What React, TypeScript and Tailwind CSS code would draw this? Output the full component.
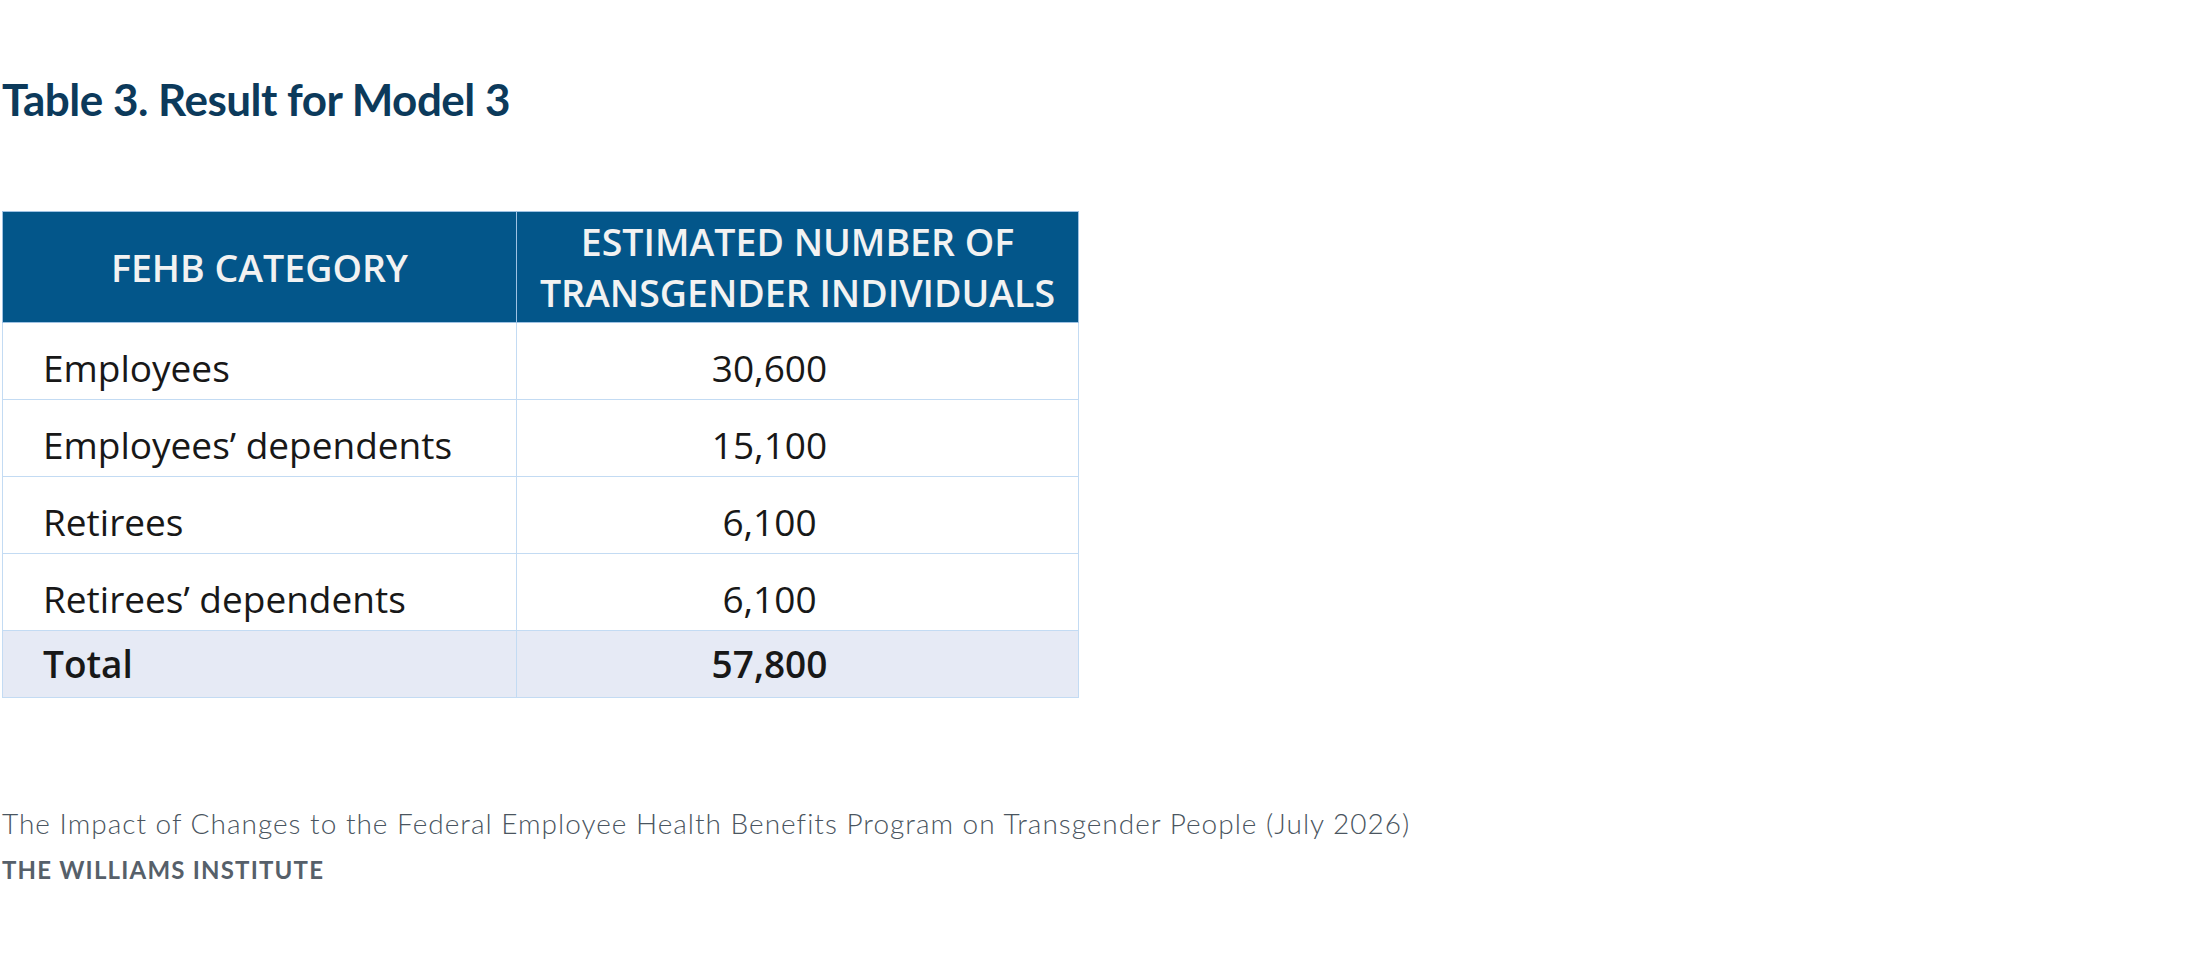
const rows = [
  { label: "Employees", value: "30,600" },
  { label: "Employees’ dependents", value: "15,100" },
  { label: "Retirees", value: "6,100" },
  { label: "Retirees’ dependents", value: "6,100" },
];

export default function App() {
  return (
    <div className="min-h-screen w-full bg-white pl-[2px]">
      <h1 className="pt-[77px] font-['Lato',sans-serif] text-[44px] font-bold leading-[44px] tracking-[-0.5px] text-[#0c3a5b]">
        Table 3. Result for Model 3
      </h1>

      <table className="mt-[90px] w-[1077px] border-collapse font-['Open_Sans',sans-serif]">
        <thead>
          <tr className="h-[111px] bg-[#03568a] text-[#f2f2f2]">
            <th className="w-[514px] border border-[#9fc2e3] px-1 text-[37.5px] font-semibold leading-[51px]">
              FEHB CATEGORY
            </th>
            <th className="border border-[#9fc2e3] px-1 text-[37.5px] font-semibold leading-[51px]">
              ESTIMATED NUMBER OF
              <br />
              TRANSGENDER INDIVIDUALS
            </th>
          </tr>
        </thead>
        <tbody className="text-[37px] text-[#181818]">
          {rows.map((row) => (
            <tr key={row.label} className="h-[77px]">
              <td className="border border-[#c3dbf3] pl-[40px] pt-[13px] text-left font-normal">
                {row.label}
              </td>
              <td className="border border-[#c3dbf3] pr-[56px] pt-[13px] text-center font-normal">
                {row.value}
              </td>
            </tr>
          ))}
          <tr className="h-[67px] bg-[#e6eaf5]">
            <td className="border border-[#c3dbf3] pl-[40px] text-left font-semibold">
              Total
            </td>
            <td className="border border-[#c3dbf3] pr-[56px] text-center font-semibold">
              57,800
            </td>
          </tr>
        </tbody>
      </table>

      <p className="mt-[111px] font-['Lato',sans-serif] text-[28px] font-light leading-[28px] tracking-[1px] text-[#4a5560]">
        The Impact of Changes to the Federal Employee Health Benefits Program on Transgender People (July 2026)
      </p>
      <p className="mt-[21px] font-['Lato',sans-serif] text-[24px] font-bold leading-[24px] tracking-[1.2px] text-[#56606a]">
        THE WILLIAMS INSTITUTE
      </p>
    </div>
  );
}
